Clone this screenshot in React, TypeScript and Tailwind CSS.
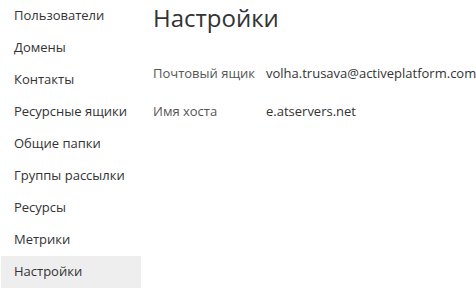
const navItems = [
  'Пользователи',
  'Домены',
  'Контакты',
  'Ресурсные ящики',
  'Общие папки',
  'Группы рассылки',
  'Ресурсы',
  'Метрики',
  'Настройки',
];

export default function App() {
  const active = 'Настройки';

  return (
    <div
      className="flex w-[476px] h-[292px] bg-white text-[#333] overflow-hidden"
      style={{ fontFamily: '"Open Sans", sans-serif' }}
    >
      <nav className="flex flex-col w-[140px] ml-[1px] shrink-0">
        {navItems.map((item) => (
          <div
            key={item}
            className={`h-8 flex items-center pl-[13px] text-[13px] ${
              item === active ? 'bg-[#eeeeee]' : ''
            }`}
          >
            {item}
          </div>
        ))}
      </nav>

      <main className="flex-1 pl-[12px]">
        <h1 className="text-[24px] leading-[36px] text-[#333] font-normal">Настройки</h1>
        <div className="mt-[28px] flex flex-col gap-[19px] text-[13px]">
          <div className="flex items-center h-[19px]">
            <span className="w-[113px] text-[#555]">Почтовый ящик</span>
            <span>volha.trusava@activeplatform.com</span>
          </div>
          <div className="flex items-center h-[19px]">
            <span className="w-[113px] text-[#555]">Имя хоста</span>
            <span>e.atservers.net</span>
          </div>
        </div>
      </main>
    </div>
  );
}
